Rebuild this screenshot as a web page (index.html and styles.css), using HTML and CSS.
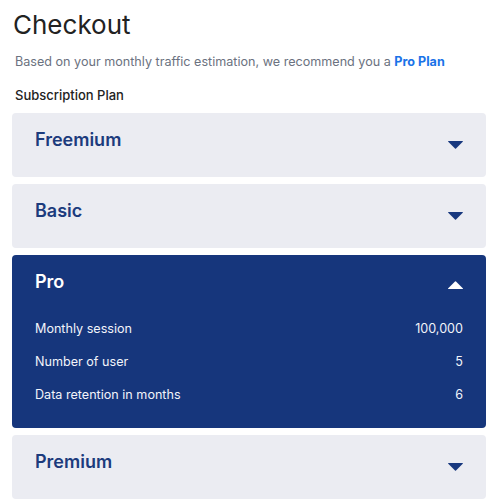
FILE: index.html
```html
<!DOCTYPE html>
<html>
<head>
<meta charset="utf-8">
<link rel="stylesheet" href="styles.css">
</head>
<body>
<div class="page">
  <h1 class="title">Checkout</h1>
  <p class="lead">Based on your monthly traffic estimation, we recommend you a <a class="lead-link">Pro Plan</a></p>
  <div class="section-label">Subscription Plan</div>
  <div class="plans">
    <div class="card">
      <div class="card-head">
        <span class="card-title">Freemium</span>
        <svg class="arrow" width="15" height="8" viewBox="0 0 15 8"><path d="M0 0.5 Q0 0 0.6 0 H14.4 Q15 0 15 0.5 L8 7.5 Q7.5 8 7 7.5 Z" fill="currentColor"/></svg>
      </div>
    </div>
    <div class="card">
      <div class="card-head">
        <span class="card-title">Basic</span>
        <svg class="arrow" width="15" height="8" viewBox="0 0 15 8"><path d="M0 0.5 Q0 0 0.6 0 H14.4 Q15 0 15 0.5 L8 7.5 Q7.5 8 7 7.5 Z" fill="currentColor"/></svg>
      </div>
    </div>
    <div class="card open">
      <div class="card-head">
        <span class="card-title">Pro</span>
        <svg class="arrow up" width="15" height="8" viewBox="0 0 15 8"><path d="M0 7.5 Q0 8 0.6 8 H14.4 Q15 8 15 7.5 L8 0.5 Q7.5 0 7 0.5 Z" fill="currentColor"/></svg>
      </div>
      <div class="details">
        <div class="row"><span>Monthly session</span><span>100,000</span></div>
        <div class="row"><span>Number of user</span><span>5</span></div>
        <div class="row"><span>Data retention in months</span><span>6</span></div>
      </div>
    </div>
    <div class="card">
      <div class="card-head">
        <span class="card-title">Premium</span>
        <svg class="arrow" width="15" height="8" viewBox="0 0 15 8"><path d="M0 0.5 Q0 0 0.6 0 H14.4 Q15 0 15 0.5 L8 7.5 Q7.5 8 7 7.5 Z" fill="currentColor"/></svg>
      </div>
    </div>
  </div>
</div>
</body>
</html>
```

FILE: styles.css
```css
* { box-sizing: border-box; }
html, body { margin: 0; padding: 0; background: #fff; }
body { font-family: Inter, "Noto Sans", sans-serif; color: #222; }
.page { padding: 0 6px 0 12px; }
.title {
  margin: 9px 0 0 1px;
  font-size: 26px;
  line-height: 32px;
  font-weight: 400;
  color: #222;
}
.lead {
  margin: 12px 0 0 3px;
  font-size: 12.6px;
  line-height: 18px;
  color: #6b7280;
}
.lead-link { color: #1a73e8; font-weight: 700; }
.section-label {
  margin: 15px 0 0 3px;
  font-size: 13px;
  line-height: 18px;
  font-weight: 500;
  color: #222;
}
.plans {
  margin-top: 9px;
  display: flex;
  flex-direction: column;
  gap: 7px;
}
.card {
  background: #ebecf2;
  border-radius: 4px;
  padding: 16px 23px 26px;
  color: #1c3b7d;
}
.card-head {
  display: flex;
  justify-content: space-between;
  align-items: flex-start;
}
.card-title {
  font-size: 18px;
  line-height: 22px;
  font-weight: 600;
}
.arrow { margin-top: 12px; color: #18387f; }
.card.open {
  background: #16367c;
  color: #fff;
  padding-bottom: 17px;
}
.card.open .arrow { color: #fff; margin-top: 10px; }
.details { margin-top: 19px; }
.row {
  display: flex;
  justify-content: space-between;
  font-size: 12.6px;
  line-height: 33px;
  color: #f2f4fa;
}
```
